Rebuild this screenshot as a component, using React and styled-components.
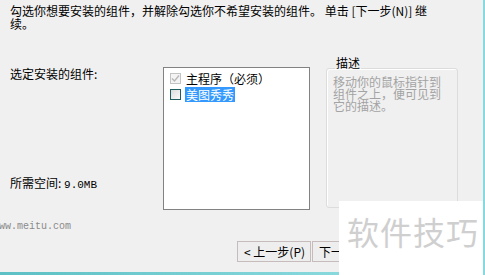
import React from 'react';
import styled, { createGlobalStyle } from 'styled-components';

const GlobalStyle = createGlobalStyle`
  html, body {
    margin: 0;
    padding: 0;
    background: #f0f0f0;
  }
  body {
    font-family: "Noto Sans CJK SC", "DejaVu Sans", sans-serif;
    font-size: 12px;
    color: #000;
  }
`;

const Window = styled.div`
  position: relative;
  width: 485px;
  height: 275px;
  box-sizing: border-box;
  overflow: hidden;
  background: #f0f0f0;
  border-right: 2px solid #86d9e0;
  display: flex;
  flex-direction: column;
  padding: 4px 0 0 10px;

  &::after {
    content: '';
    position: absolute;
    left: 0;
    right: 0;
    bottom: 0;
    height: 3px;
    background: linear-gradient(to right, #5cc0c4, #9be3e8);
  }
`;

const Intro = styled.p`
  margin: 0;
  width: 440px;
  line-height: 13px;
`;

const Main = styled.div`
  display: grid;
  grid-template-columns: 153px 147px 16px 132px;
  margin-top: 37px;
`;

const LabelColumn = styled.div`
  display: flex;
  flex-direction: column;
  justify-content: space-between;
  height: 143px;
  padding-bottom: 18px;
  box-sizing: border-box;
  line-height: 13px;
`;

const Mono = styled.span`
  font-family: "Liberation Mono", monospace;
  font-size: 11px;
`;

const ListBox = styled.div`
  grid-column: 2;
  height: 143px;
  box-sizing: border-box;
  background: #fff;
  border: 1px solid #828282;
  padding: 2px 0 0 6px;
`;

const Item = styled.div`
  display: flex;
  align-items: center;
  height: 16px;
  gap: 2px;
`;

const Check = styled.span`
  width: 11px;
  height: 11px;
  box-sizing: border-box;
  border: 1px solid ${(p) => (p.disabled ? '#c4c4c4' : '#1f5f5f')};
  background: ${(p) => (p.disabled ? '#f4f4f4' : 'linear-gradient(135deg, #dcdcdc, #fafafa)')};
  display: flex;
  align-items: center;
  justify-content: center;
  margin-right: 2px;
`;

const ItemText = styled.span`
  line-height: 15px;
  padding: 0 1px;
  background: ${(p) => (p.selected ? '#3399ff' : 'transparent')};
  color: ${(p) => (p.selected ? '#fff' : '#000')};
`;

const Group = styled.fieldset`
  grid-column: 4;
  margin: -11px 0 0 0;
  height: 152px;
  box-sizing: border-box;
  border: 1px solid #dcdcdc;
  border-radius: 3px;
  padding: 0 6px;
  box-shadow: inset 1px 1px 0 #fff;

  legend {
    padding: 0 1px 10px;
    margin-left: 2px;
    line-height: 14px;
  }
`;

const Hint = styled.p`
  margin: -4px 0 0 0;
  color: #a3a3a3;
  line-height: 12px;
  width: 112px;
`;

const Url = styled.div`
  margin: 11px 0 0 -17px;
  font-family: "Liberation Mono", monospace;
  font-size: 10px;
  color: #8a8a8a;
  height: 12px;
  line-height: 12px;
`;

const ButtonRow = styled.div`
  display: flex;
  gap: 1px;
  margin: 8px 0 0 227px;
`;

const Button = styled.button`
  width: ${(p) => p.w || 74}px;
  height: 21px;
  padding: 0;
  box-sizing: border-box;
  border: 1px solid #c7bcbc;
  background: #eeeeee;
  font-family: inherit;
  font-size: 12px;
  color: #000;
  text-align: left;
  padding-left: 6px;
`;

const Watermark = styled.div`
  position: absolute;
  left: 339px;
  top: 201px;
  right: 0;
  bottom: 0;
  background: #fff;
  color: #cfcfcf;
  font-size: 32px;
  letter-spacing: 1px;
  padding: 12px 0 0 8px;
  line-height: 36px;
  z-index: 2;
`;

function Tick() {
  return (
    <svg width="9" height="9" viewBox="0 0 9 9">
      <path d="M1 4.5 L3.5 7 L8 1.5" fill="none" stroke="#b8b8b8" strokeWidth="1.4" />
    </svg>
  );
}

export default function App() {
  return (
    <Window>
      <GlobalStyle />
      <Intro>
        勾选你想要安装的组件，并解除勾选你不希望安装的组件。 单击 [下一步(N)] 继续。
      </Intro>

      <Main>
        <LabelColumn>
          <span>选定安装的组件:</span>
          <span>
            所需空间: <Mono>9.0MB</Mono>
          </span>
        </LabelColumn>

        <ListBox>
          <Item>
            <Check disabled>
              <Tick />
            </Check>
            <ItemText>主程序（必须）</ItemText>
          </Item>
          <Item>
            <Check />
            <ItemText selected>美图秀秀</ItemText>
          </Item>
        </ListBox>

        <Group>
          <legend>描述</legend>
          <Hint>移动你的鼠标指针到组件之上，便可见到它的描述。</Hint>
        </Group>
      </Main>

      <Url>www.meitu.com</Url>

      <ButtonRow>
        <Button>&lt; 上一步(P)</Button>
        <Button w={75}>下一步(N) &gt;</Button>
      </ButtonRow>

      <Watermark>软件技巧</Watermark>
    </Window>
  );
}
